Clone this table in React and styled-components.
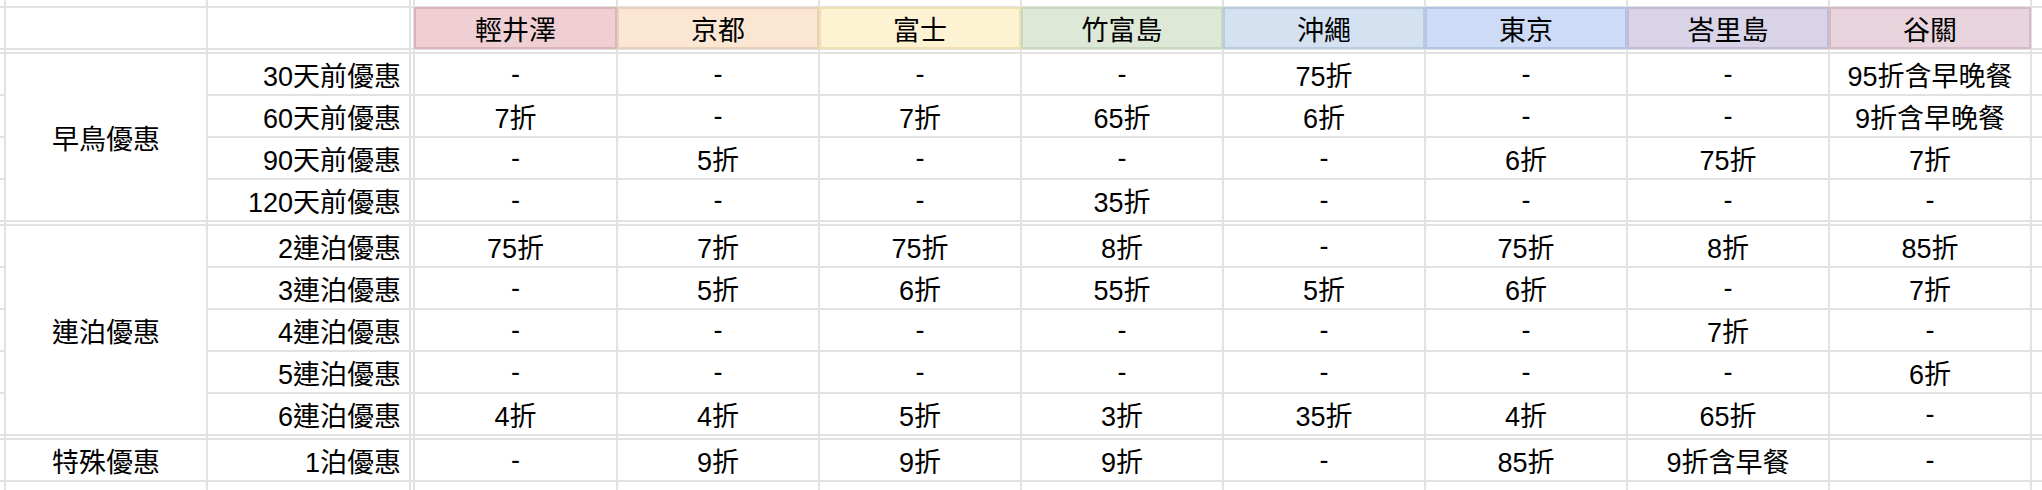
import React from "react";
import styled, { createGlobalStyle } from "styled-components";

const GlobalStyle = createGlobalStyle`
  html, body {
    margin: 0;
    padding: 0;
    background: #ffffff;
    overflow: hidden;
  }
`;

const Sheet = styled.div`
  display: grid;
  grid-template-columns: 4px 200px 201px 2px 201px repeat(7, 200px) 10px;
  grid-template-rows: 6px 40px 2px repeat(4, 40px) 2px repeat(5, 40px) 2px 40px 8px;
  gap: 2px;
  width: 2042px;
  height: 490px;
  overflow: hidden;
  background: #e2e2e2;
  font-family: "Liberation Sans", "Noto Sans CJK TC", sans-serif;
  font-size: 27px;
  color: #000;
`;

const Blank = styled.div`
  background: #ffffff;
`;

const HeaderCell = styled.div`
  display: flex;
  align-items: center;
  justify-content: center;
  background: ${(p) => p.$bg};
  box-shadow: 0 0 0 1px ${(p) => p.$border}, inset 0 0 0 1px ${(p) => p.$border};
`;

const GroupCell = styled.div`
  grid-row: span ${(p) => p.$span};
  display: flex;
  align-items: center;
  justify-content: center;
  background: #ffffff;
`;

const LabelCell = styled.div`
  display: flex;
  align-items: center;
  justify-content: flex-end;
  padding-right: 8px;
  background: #ffffff;
`;

const ValueCell = styled.div`
  display: flex;
  align-items: center;
  justify-content: center;
  background: #ffffff;
  white-space: nowrap;
`;

const places = [
  { name: "輕井澤", bg: "#efcfd3", border: "#dab4b8" },
  { name: "京都", bg: "#fbe6d4", border: "#ead0b6" },
  { name: "富士", bg: "#fdf2d1", border: "#eee0b0" },
  { name: "竹富島", bg: "#dde9d6", border: "#c7d9bd" },
  { name: "沖繩", bg: "#d3e1f1", border: "#b9cbe1" },
  { name: "東京", bg: "#cddbf6", border: "#b2c4e6" },
  { name: "峇里島", bg: "#d9d3e7", border: "#c3bad7" },
  { name: "谷關", bg: "#e9d4dd", border: "#d6bac6" },
];

const groups = [
  {
    title: "早鳥優惠",
    rows: [
      ["30天前優惠", ["-", "-", "-", "-", "75折", "-", "-", "95折含早晚餐"]],
      ["60天前優惠", ["7折", "-", "7折", "65折", "6折", "-", "-", "9折含早晚餐"]],
      ["90天前優惠", ["-", "5折", "-", "-", "-", "6折", "75折", "7折"]],
      ["120天前優惠", ["-", "-", "-", "35折", "-", "-", "-", "-"]],
    ],
  },
  {
    title: "連泊優惠",
    rows: [
      ["2連泊優惠", ["75折", "7折", "75折", "8折", "-", "75折", "8折", "85折"]],
      ["3連泊優惠", ["-", "5折", "6折", "55折", "5折", "6折", "-", "7折"]],
      ["4連泊優惠", ["-", "-", "-", "-", "-", "-", "7折", "-"]],
      ["5連泊優惠", ["-", "-", "-", "-", "-", "-", "-", "6折"]],
      ["6連泊優惠", ["4折", "4折", "5折", "3折", "35折", "4折", "65折", "-"]],
    ],
  },
  {
    title: "特殊優惠",
    rows: [["1泊優惠", ["-", "9折", "9折", "9折", "-", "85折", "9折含早餐", "-"]]],
  },
];

const COLS = 13;

function BlankRow({ id }) {
  return Array.from({ length: COLS }, (_, i) => <Blank key={`${id}-${i}`} />);
}

export default function App() {
  const cells = [];

  cells.push(<BlankRow key="top" id="top" />);

  cells.push(<Blank key="h-edge" />);
  cells.push(<Blank key="h-a" />);
  cells.push(<Blank key="h-b" />);
  cells.push(<Blank key="h-sep" />);
  places.forEach((p) => {
    cells.push(
      <HeaderCell key={`h-${p.name}`} $bg={p.bg} $border={p.border}>
        {p.name}
      </HeaderCell>
    );
  });
  cells.push(<Blank key="h-end" />);

  groups.forEach((g, gi) => {
    cells.push(<BlankRow key={`sep-${gi}`} id={`sep-${gi}`} />);
    g.rows.forEach(([label, values], ri) => {
      cells.push(<Blank key={`${label}-edge`} />);
      if (ri === 0) {
        cells.push(
          <GroupCell key={`${g.title}-title`} $span={g.rows.length}>
            {g.title}
          </GroupCell>
        );
      }
      cells.push(<LabelCell key={`${label}-label`}>{label}</LabelCell>);
      cells.push(<Blank key={`${label}-sep`} />);
      values.forEach((v, vi) => {
        cells.push(<ValueCell key={`${label}-${vi}`}>{v}</ValueCell>);
      });
      cells.push(<Blank key={`${label}-end`} />);
    });
  });

  cells.push(<BlankRow key="bottom" id="bottom" />);

  return (
    <>
      <GlobalStyle />
      <Sheet>{cells}</Sheet>
    </>
  );
}
